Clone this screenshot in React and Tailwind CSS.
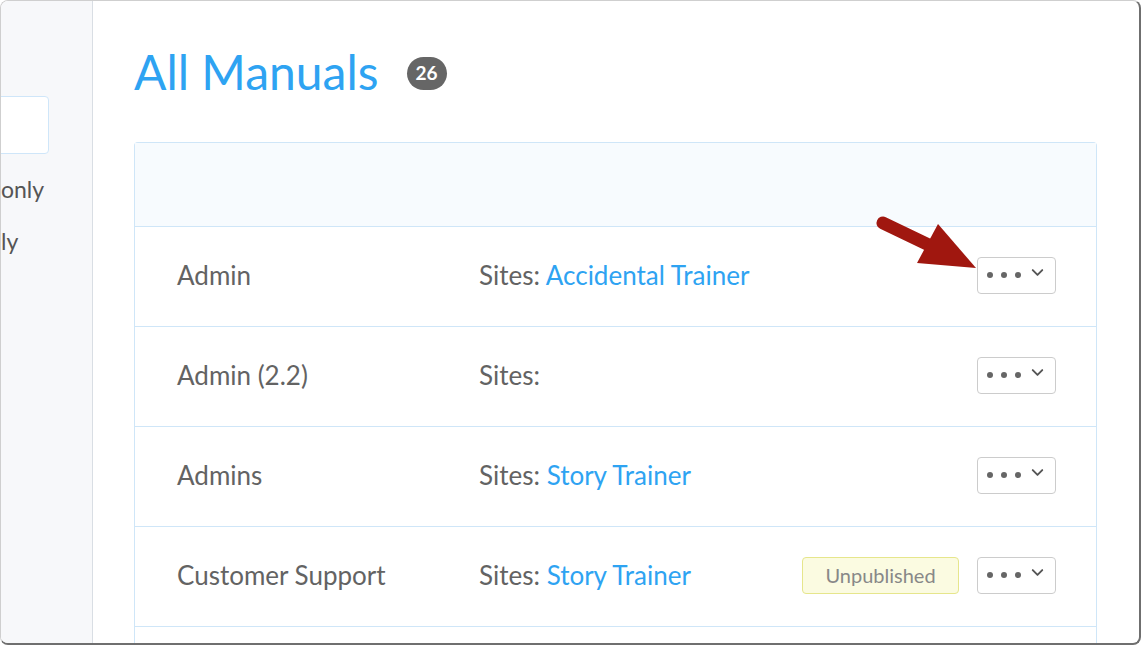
import { ChevronDown } from 'lucide-react'

const rows = [
  { name: 'Admin', site: 'Accidental Trainer' },
  { name: 'Admin (2.2)', site: null },
  { name: 'Admins', site: 'Story Trainer' },
  { name: 'Customer Support', site: 'Story Trainer', unpublished: true },
]

function ActionsButton() {
  return (
    <button className="flex h-[37px] w-[79px] items-center justify-center gap-[7px] rounded-[4px] border border-[#cccccc] bg-white">
      <span className="flex items-center gap-[8px]">
        <span className="h-[6px] w-[6px] rounded-full bg-[#666]" />
        <span className="h-[6px] w-[6px] rounded-full bg-[#666]" />
        <span className="h-[6px] w-[6px] rounded-full bg-[#666]" />
      </span>
      <ChevronDown size={19} strokeWidth={2.4} className="mb-[5px] text-[#555]" />
    </button>
  )
}

function Row({ row }) {
  return (
    <div className="flex h-[100px] shrink-0 items-center border-t border-[#cfe6f8] pb-[3px] pl-[42px] pr-[40px] text-[26px] text-[#636363]">
      <div className="w-[302px]">{row.name}</div>
      <div className="flex-1">
        Sites:{row.site && <span className="text-[#2ea3f2]"> {row.site}</span>}
      </div>
      {row.unpublished && (
        <span className="mr-[18px] flex h-[37px] w-[157px] items-center justify-center rounded-[4px] border border-[#e6e68c] bg-[#fbfbe1] text-[20px] text-[#888]">
          Unpublished
        </span>
      )}
      <ActionsButton />
    </div>
  )
}

export default function App() {
  return (
    <div className="h-[648px] w-[1144px] overflow-hidden bg-white font-['Lato',sans-serif]">
      <div className="relative flex h-[645px] w-[1141px] overflow-hidden rounded-[8px] border border-[#cfcfcf] border-r-[#6f6f6f] border-b-[#6f6f6f] border-r-2 border-b-2">
        {/* sidebar, cropped on the left */}
        <aside className="flex w-[92px] shrink-0 flex-col border-r border-[#d9dee4] bg-[#f7f8fa]">
          <div className="ml-[-40px] mt-[95px] h-[58px] w-[88px] rounded-[4px] border border-[#cfe6f9] bg-white" />
          <div className="mt-[20px] w-[43px] text-right text-[23px] leading-[30px] text-[#555]">only</div>
          <div className="mt-[22px] w-[16px] text-right text-[23px] leading-[30px] text-[#555]">ly</div>
        </aside>

        <main className="flex flex-1 flex-col pl-[41px] pr-[42px] pt-[42px]">
          <div className="flex items-center">
            <h1 className="text-[48px] leading-[58px] text-[#2ea3f2]">All Manuals</h1>
            <span className="ml-[28px] mt-[2px] flex h-[33px] w-[40px] items-center justify-center rounded-full bg-[#666] text-[19px] font-bold text-white">
              26
            </span>
          </div>

          <div className="mt-[41px] flex flex-col rounded-t-[4px] border border-b-0 border-[#cfe6f8]">
            <div className="h-[83px] shrink-0 bg-[#f7fbfe]" />
            {rows.map((r) => (
              <Row key={r.name} row={r} />
            ))}
            <div className="h-[100px] shrink-0 border-t border-[#cfe6f8]" />
          </div>
        </main>

        {/* callout arrow */}
        <svg className="pointer-events-none absolute left-0 top-0" width="1144" height="648">
          <line x1="882" y1="222" x2="932" y2="246" stroke="#a0170f" strokeWidth="13" strokeLinecap="round" />
          <polygon points="937,223 916,262 975,267" fill="#a0170f" />
        </svg>
      </div>
    </div>
  )
}
